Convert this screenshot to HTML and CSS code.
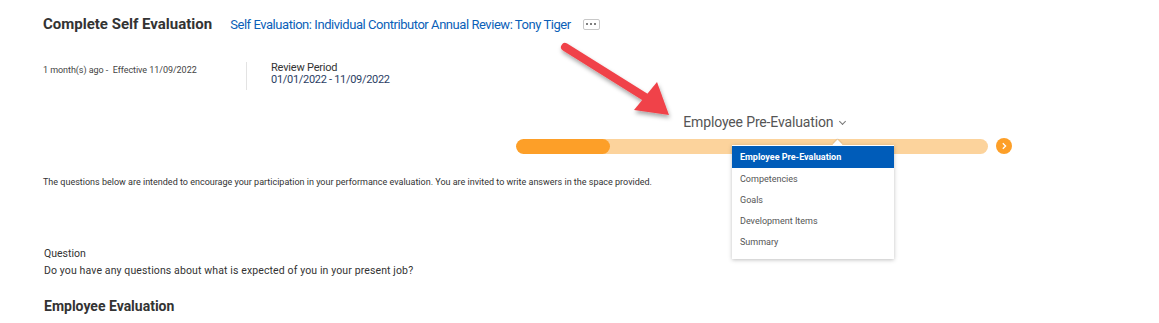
FILE: index.html
```html
<!DOCTYPE html>
<html lang="en">
<head>
    <meta charset="UTF-8">
    <title>Complete Self Evaluation</title>
    <link rel="stylesheet" href="styles.css">
</head>
<body>
    <div class="page">
        <div class="header">
            <h1>Complete Self Evaluation</h1>
            <a class="subject" href="#">Self Evaluation: Individual Contributor Annual Review: Tony Tiger</a>
            <button class="more"><span></span><span></span><span></span></button>
        </div>

        <div class="meta">
            <div class="meta-when">1 month(s) ago -&nbsp; Effective 11/09/2022</div>
            <div class="meta-period">
                <div class="label">Review Period</div>
                <div class="value">01/01/2022 - 11/09/2022</div>
            </div>
        </div>

        <div class="stepper">
            <div class="step-title">Employee Pre-Evaluation <span class="chev"></span></div>
            <div class="track-row">
                <div class="track"><div class="fill" style="width: 20%"></div></div>
                <button class="next">
                    <svg width="8" height="8" viewBox="0 0 8 8"><path d="M2.8 1.2 L5.6 4 L2.8 6.8" fill="none" stroke="#fff" stroke-width="1.3"/></svg>
                </button>
            </div>
            <ul class="menu">
                <li class="active">Employee Pre-Evaluation</li>
                <li>Competencies</li>
                <li>Goals</li>
                <li>Development Items</li>
                <li>Summary</li>
            </ul>
        </div>

        <p class="intro">The questions below are intended to encourage your participation in your performance evaluation. You are invited to write answers in the space provided.</p>

        <div class="question">
            <div class="q-label">Question</div>
            <div class="q-text">Do you have any questions about what is expected of you in your present job?</div>
        </div>

        <h2>Employee Evaluation</h2>

        <svg class="callout" width="130" height="90" viewBox="0 0 130 90">
            <defs>
                <filter id="shadow" x="-20%" y="-20%" width="140%" height="150%">
                    <feDropShadow dx="1" dy="3" stdDeviation="2" flood-color="#000" flood-opacity="0.35"/>
                </filter>
            </defs>
            <g filter="url(#shadow)">
                <line x1="8" y1="7" x2="88" y2="57" stroke="#f0434a" stroke-width="8" stroke-linecap="round"/>
                <polygon points="77,70 100,42 112,75" fill="#f0434a"/>
            </g>
        </svg>
    </div>
</body>
</html>
```

FILE: styles.css
```css
body {
    margin: 0;
    font-family: Roboto, "Liberation Sans", sans-serif;
    color: #333;
    background: #fff;
}

.page {
    position: relative;
    width: 1159px;
    height: 323px;
    padding: 0 0 0 43px;
    box-sizing: border-box;
    overflow: hidden;
}

.header {
    display: flex;
    align-items: center;
    padding-top: 14px;
    height: 20px;
}

h1 {
    margin: 0;
    font-size: 15px;
    font-weight: bold;
    color: #333;
}

.subject {
    margin-left: 18px;
    font-size: 13px;
    color: #0b5fb8;
    text-decoration: none;
    letter-spacing: -0.45px;
}

.more {
    display: flex;
    align-items: center;
    justify-content: center;
    gap: 2px;
    margin-left: 12px;
    width: 17px;
    height: 11px;
    padding: 0;
    border: 1px solid #c8c8c8;
    border-radius: 2px;
    background: #fff;
}

.more span {
    width: 2px;
    height: 2px;
    border-radius: 50%;
    background: #555;
}

.meta {
    display: flex;
    margin-top: 28px;
}

.meta-when {
    width: 203px;
    padding-top: 3px;
    font-size: 9px;
    color: #444;
    letter-spacing: -0.05px;
}

.meta-period {
    border-left: 1px solid #e3e3e3;
    padding: 0 0 4px 24px;
    font-size: 11px;
    line-height: 12px;
}

.meta-period .label {
    color: #333;
    letter-spacing: -0.2px;
}

.meta-period .value {
    color: #2b3e63;
    letter-spacing: -0.3px;
}

.stepper {
    position: relative;
    width: 496px;
    margin: 23px 0 0 473px;
}

.step-title {
    text-align: center;
    margin-left: 0;
    font-size: 14px;
    line-height: 18px;
    color: #555;
    letter-spacing: -0.15px;
}

.chev {
    display: inline-block;
    width: 4px;
    height: 4px;
    margin: 0 0 3px 3px;
    border-right: 1px solid #777;
    border-bottom: 1px solid #777;
    transform: rotate(45deg);
}

.track-row {
    display: flex;
    align-items: center;
    gap: 8px;
    margin-top: 7px;
}

.track {
    width: 472px;
    height: 15px;
    border-radius: 8px;
    background: #fcd39c;
    overflow: hidden;
}

.fill {
    height: 100%;
    border-radius: 8px;
    background: #fd9f28;
}

.next {
    width: 16px;
    height: 16px;
    padding: 0;
    border: none;
    border-radius: 50%;
    background: #fd9f28;
    display: flex;
    align-items: center;
    justify-content: center;
}

.menu {
    position: absolute;
    top: 32px;
    left: 216px;
    width: 162px;
    margin: 0;
    padding: 1px 0 6px;
    list-style: none;
    background: #fff;
    box-shadow: 0 1px 4px rgba(0, 0, 0, 0.25);
    font-size: 9px;
    color: #555;
}

.menu::before {
    content: "";
    position: absolute;
    top: -4px;
    left: 102px;
    width: 7px;
    height: 7px;
    background: #fff;
    transform: rotate(45deg);
    box-shadow: -1px -1px 1px rgba(0, 0, 0, 0.1);
}

.menu li {
    position: relative;
    height: 21px;
    line-height: 21px;
    padding-left: 8px;
}

.menu li.active {
    height: 22px;
    line-height: 22px;
    margin-bottom: 1px;
    background: #005cb9;
    color: #fff;
    font-weight: bold;
}

.intro {
    margin: 23px 0 0;
    font-size: 9px;
    color: #333;
}

.question {
    margin: 58px 0 0 1px;
    font-size: 10.5px;
    line-height: 17px;
    color: #333;
}

.q-text {
    letter-spacing: 0.12px;
}

h2 {
    margin: 19px 0 0 1px;
    font-size: 14px;
    font-weight: bold;
    color: #333;
}

.callout {
    position: absolute;
    left: 557px;
    top: 40px;
}
```
